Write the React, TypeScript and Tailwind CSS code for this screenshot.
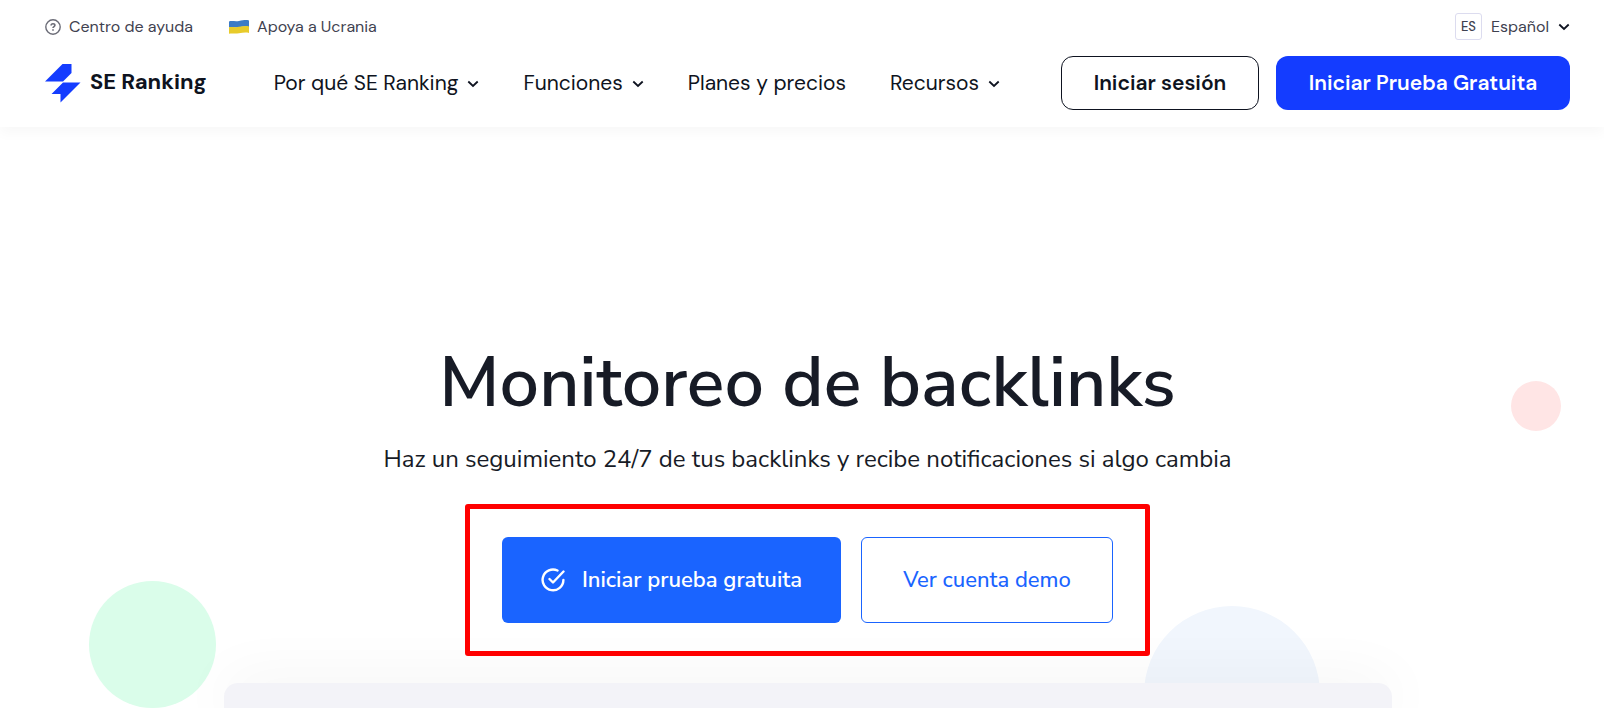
const INK = '#0e1320'
const BRAND = '#143cff'

const Chevron = () => (
  <svg viewBox="0 0 12 8" width="12" height="8" fill="none" aria-hidden="true" className="block shrink-0">
    <path d="M1.3 1.5 L6 6 L10.7 1.5" stroke={INK} strokeWidth="1.8" />
  </svg>
)

const HelpIcon = () => (
  <svg viewBox="0 0 16 16" width="16" height="16" fill="none" aria-hidden="true" className="block shrink-0">
    <circle cx="8" cy="8" r="7.2" stroke="#6b6c77" strokeWidth="1.4" />
    <path d="M6.1 6.6 C6.1 5.3 6.9 4.7 8 4.7 C9.1 4.7 9.9 5.4 9.9 6.3 C9.9 7.6 8 7.6 8 9.1" stroke="#6b6c77" strokeWidth="1.6" />
    <path d="M8 10.2 V11.7" stroke="#6b6c77" strokeWidth="1.6" />
  </svg>
)

const FlagIcon = () => (
  <svg viewBox="0 0 20 14" width="20" height="14" aria-hidden="true" className="block shrink-0">
    <path d="M0 1.4 C3 0.4 6 1.8 10 1 C14 0.2 17 -0.4 20 0.4 V7 C17 6 14 6.4 10 7.2 C6 8.2 3 6.8 0 7.6 Z" fill="#3c7bc6" />
    <path d="M0 7.2 C3 6.4 6 7.8 10 6.8 C14 6 17 5.6 20 6.4 V13 C17 12.2 14 12.6 10 13.2 C6 14 3 13 0 13.8 Z" fill="#e8cb2b" />
  </svg>
)

const LogoMark = () => (
  <svg viewBox="0 0 36 40" width="36" height="40" aria-hidden="true" className="block shrink-0">
    <path d="M17.5 1 H26.5 V10 L18 18.5 H0 Z" fill={BRAND} />
    <path d="M18 19.5 H35.5 L15.5 39.5 V31 H6.5 Z" fill={BRAND} />
  </svg>
)

const CheckIcon = () => (
  <svg viewBox="0 0 24 24" width="24" height="24" fill="none" stroke="#fff" strokeWidth="2.4" strokeLinecap="round" strokeLinejoin="round" aria-hidden="true" className="block shrink-0">
    <path d="M16.5 2.5 A10.4 10.4 0 1 0 22.4 12" />
    <path d="M8.5 11 L12 14.5 L22.5 3.5" />
  </svg>
)

const NAV = [
  { label: 'Por qué SE Ranking', menu: true },
  { label: 'Funciones', menu: true },
  { label: 'Planes y precios', menu: false },
  { label: 'Recursos', menu: true },
]

function Header() {
  return (
    <header className="relative z-10 bg-white pl-[45px] pr-[34px] pt-[13px] pb-[17px] font-['DM_Sans','Inter',sans-serif] text-[#0e1320] shadow-[0_6px_12px_rgba(0,0,0,0.03)]">
      <div className="flex items-center justify-between h-[27px] text-[16px] text-[#3f4250]">
        <div className="flex items-center gap-[36px]">
          <a href="#ayuda" className="flex items-center gap-2">
            <HelpIcon />
            Centro de ayuda
          </a>
          <a href="#ucrania" className="flex items-center gap-2">
            <FlagIcon />
            Apoya a Ucrania
          </a>
        </div>
        <button type="button" className="flex items-center gap-[9px]">
          <span className="flex items-center justify-center w-[27px] h-[27px] rounded-[3px] border border-[#dcdcef] text-[13px] font-medium">ES</span>
          <span>Español</span>
          <Chevron />
        </button>
      </div>

      <div className="flex items-center mt-4 h-[54px]">
        <a href="#inicio" className="flex items-center gap-[9px] text-[22px] font-bold whitespace-nowrap">
          <LogoMark />
          <span className="pb-1">SE Ranking</span>
        </a>
        <nav className="flex items-center gap-[44px] ml-[67px] pt-0.5 text-[21px] whitespace-nowrap">
          {NAV.map(item =>
            item.menu ? (
              <button key={item.label} type="button" className="flex items-center gap-[9px]">
                {item.label}
                <Chevron />
              </button>
            ) : (
              <a key={item.label} href="#planes">{item.label}</a>
            )
          )}
        </nav>
        <div className="flex items-center gap-[17px] ml-auto h-full text-[21px] font-semibold whitespace-nowrap">
          <a href="#sesion" className="flex items-center justify-center w-[198px] h-full pt-0.5 rounded-[12px] border border-[#0e1320]">
            Iniciar sesión
          </a>
          <a href="#prueba" className="flex items-center justify-center w-[294px] h-full pt-0.5 rounded-[12px] bg-[#143cff] text-white">
            Iniciar Prueba Gratuita
          </a>
        </div>
      </div>
    </header>
  )
}

function Hero() {
  return (
    <main className="relative flex flex-col flex-1 items-center pl-[11px] font-['Nunito_Sans','Nunito','Lato',sans-serif] text-[#171b26]">
      {/* Decorative circles */}
      <div className="absolute left-[89px] top-[454px] w-[127px] h-[127px] rounded-full bg-[#dafdea]" />
      <div className="absolute right-[43px] top-[254px] w-[50px] h-[50px] rounded-full bg-[#ffe5e5]" />
      <div className="absolute right-[284px] top-[479px] w-[176px] h-[176px] rounded-full bg-[#f1f6fd]" />

      <h1 className="mt-[212px] text-[70px] leading-[88px] font-semibold text-center">Monitoreo de backlinks</h1>
      <p className="mt-[14px] text-[24px] leading-[36px] text-center">
        Haz un seguimiento 24/7 de tus backlinks y recibe notificaciones si algo cambia
      </p>

      <div className="relative z-10 flex gap-5 mt-[27px] px-[32px] py-[28px] rounded-[3px] border-[5px] border-[#ff0000] text-[22px] whitespace-nowrap">
        <a href="#prueba" className="flex items-center justify-center gap-[17px] w-[339px] h-[86px] rounded-[6px] bg-[#1a64ff] text-white font-semibold">
          <CheckIcon />
          Iniciar prueba gratuita
        </a>
        <a href="#demo" className="flex items-center justify-center w-[252px] h-[86px] rounded-[6px] border border-[#1a64ff] bg-white text-[#1a64ff] font-medium">
          Ver cuenta demo
        </a>
      </div>

      <div className="relative flex-1 w-full max-w-[1168px] min-h-[25px] mt-[27px] rounded-t-[14px] bg-[#f3f3f8] shadow-[0_0_60px_rgba(0,0,0,0.07)]" />
    </main>
  )
}

export default function App() {
  return (
    <div className="flex flex-col min-h-screen overflow-hidden bg-white">
      <Header />
      <Hero />
    </div>
  )
}
